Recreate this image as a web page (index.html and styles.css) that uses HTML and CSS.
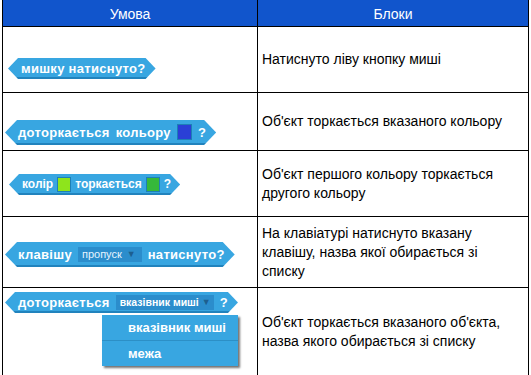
FILE: index.html
```html
<!DOCTYPE html>
<html lang="uk">
<head>
<meta charset="utf-8">
<link rel="stylesheet" href="styles.css">
</head>
<body>
<div class="table">
  <div class="cell head">Умова</div>
  <div class="cell head">Блоки</div>

  <div class="cell cond cond-1">
    <div class="blk"><span>мишку натиснуто?</span></div>
  </div>
  <div class="cell desc">Натиснуто ліву кнопку миші</div>

  <div class="cell cond cond-2">
    <div class="blk blk-tall"><span>доторкається</span><span>кольору</span><i class="sw sw-blue"></i><span>?</span></div>
  </div>
  <div class="cell desc">Об'єкт торкається вказаного кольору</div>

  <div class="cell cond cond-3">
    <div class="blk blk-sm"><span>колір</span><i class="sw sw-lime"></i><span>торкається</span><i class="sw sw-green"></i><span>?</span></div>
  </div>
  <div class="cell desc">Об'єкт першого кольору торкається другого кольору</div>

  <div class="cell cond cond-4">
    <div class="blk blk-tall"><span>клавішу</span><span class="dd dd-light">пропуск <b>▼</b></span><span>натиснуто?</span></div>
  </div>
  <div class="cell desc">На клавіатурі натиснуто вказану клавішу, назва якої обирається зі списку</div>

  <div class="cell cond cond-5">
    <div class="blk"><span>доторкається</span><span class="dd">вказівник миші <b>▼</b></span><span>?</span></div>
    <div class="menu">
      <div class="menu-item">вказівник миші</div>
      <div class="menu-item">межа</div>
    </div>
  </div>
  <div class="cell desc">Об'єкт торкається вказаного об'єкта, назва якого обирається зі списку</div>
</div>
</body>
</html>
```

FILE: styles.css
```css
html, body {
  margin: 0;
  padding: 0;
  background: #fff;
  overflow: hidden;
}

.table {
  display: grid;
  grid-template-columns: 254px 270px;
  grid-template-rows: 26px 65px 57px 65px 70px 88px;
  gap: 1px;
  background: #000;
  padding: 0 1px 1px;
  margin-left: 2px;
  width: max-content;
  font-family: "Liberation Sans", Arial, sans-serif;
}

.cell {
  background: #fff;
}

.head {
  background: #1155cc;
  color: #fff;
  font-size: 14px;
  display: flex;
  align-items: center;
  justify-content: center;
  padding-top: 2px;
}

.desc {
  display: flex;
  align-items: center;
  padding: 0 4px;
  font-size: 14px;
  line-height: 19px;
  color: #000;
}

.cond {
  position: relative;
  display: flex;
  flex-direction: column;
  align-items: flex-start;
}
.cond-1 { padding: 31px 0 0 5px; }
.cond-2 { padding: 27px 0 0 2px; }
.cond-3 { padding: 23px 0 0 6px; }
.cond-4 { padding: 25px 0 0 2px; }
.cond-5 { padding: 4px 0 0 2px; }

.blk {
  display: inline-flex;
  align-items: center;
  gap: 6px;
  height: 21px;
  padding: 0 10px 1px 13px;
  box-sizing: border-box;
  clip-path: polygon(10px 0, calc(100% - 10px) 0, 100% 50%, calc(100% - 10px) 100%, 10px 100%, 0 50%);
  background: linear-gradient(#38a6e1 0 calc(100% - 2px), #2183bd 0);
  color: #fff;
  font-size: 13px;
  font-weight: bold;
  letter-spacing: 0.3px;
  white-space: nowrap;
}
.blk-tall {
  height: 25px;
  clip-path: polygon(12px 0, calc(100% - 12px) 0, 100% 50%, calc(100% - 12px) 100%, 12px 100%, 0 50%);
}
.blk-sm {
  gap: 4px;
  font-size: 12px;
  letter-spacing: 0;
  padding-right: 9px;
}
.blk-sm .sw {
  width: 14px;
  height: 15px;
}

.sw {
  display: inline-block;
  width: 15px;
  height: 16px;
  border: 1px solid #1d7fb6;
  box-sizing: border-box;
}
.sw-blue { background: #2a3fd6; }
.sw-lime { background: #8ee41c; }
.sw-green { background: #36b83a; }

.dd {
  display: inline-flex;
  align-items: center;
  gap: 3px;
  height: 15px;
  padding: 0 3px 0 4px;
  background: #2b8dcc;
  font-size: 10.5px;
  letter-spacing: 0;
}
.dd-light {
  font-weight: normal;
  font-size: 11px;
  color: #e6f4ff;
  gap: 5px;
  padding-right: 6px;
}
.dd b {
  font-size: 9px;
  color: #1d5f8f;
}

.menu {
  position: absolute;
  left: 99px;
  top: 27px;
  width: 136px;
  background: #38a6e1;
  box-shadow: 2px 2px 2px rgba(0, 0, 0, 0.55);
  color: #fff;
  font-weight: bold;
  font-size: 13px;
}
.menu-item {
  height: 25px;
  line-height: 25px;
  padding-left: 26px;
}
.menu-item + .menu-item {
  border-top: 1px solid #2c8fc6;
}
```
